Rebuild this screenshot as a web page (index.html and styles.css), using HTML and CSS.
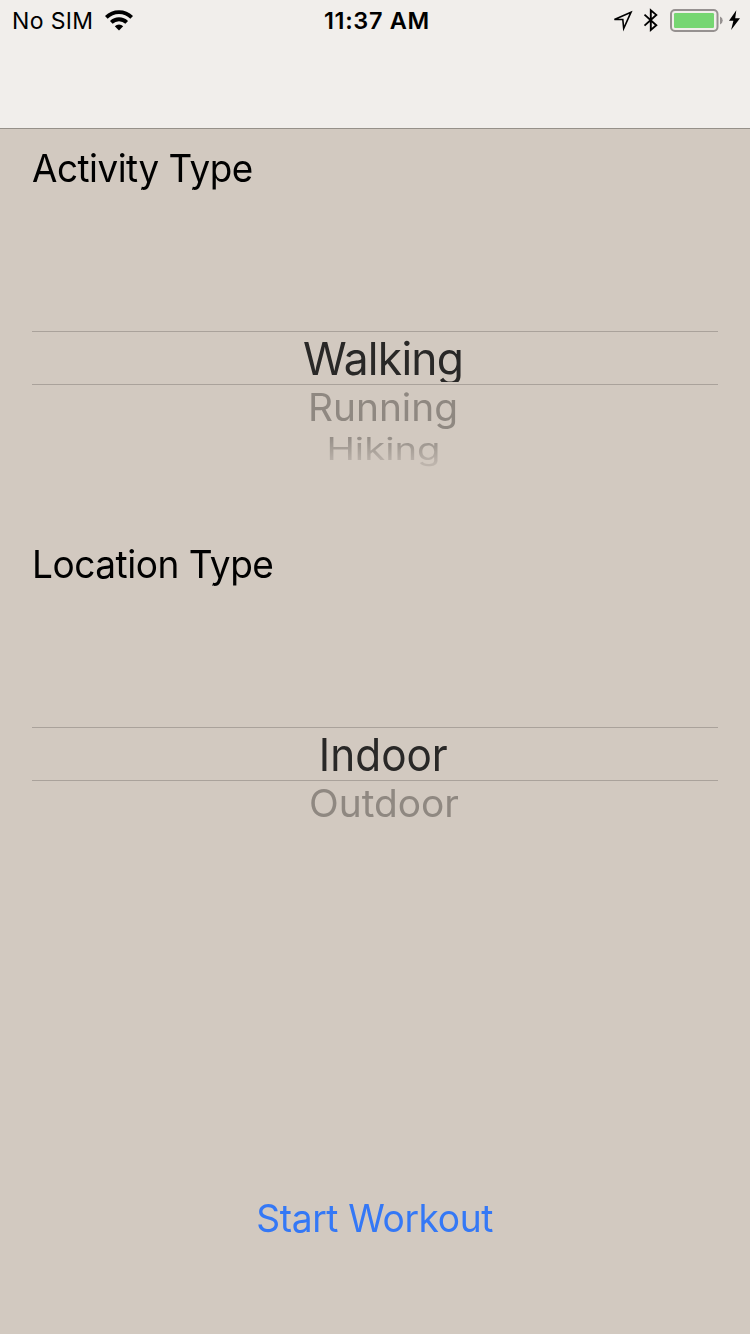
FILE: index.html
```html
<!DOCTYPE html>
<html lang="en">
<head>
<meta charset="utf-8">
<title>Start Workout</title>
<link rel="stylesheet" href="styles.css">
</head>
<body>
<header class="nav">
  <div class="status">
    <div class="status-left">
      <span class="carrier">No SIM</span>
      <svg class="wifi" width="28" height="21" viewBox="0 0 28 21">
        <path d="M14 20.4 9.8 16.2a6 6 0 0 1 8.4 0z"/>
        <path class="arc" d="M6.3 12.4a11 11 0 0 1 15.4 0M1.3 7.3a18 18 0 0 1 25.4 0"/>
      </svg>
    </div>
    <span class="time">11:37 AM</span>
    <svg class="indicators" width="130" height="40" viewBox="0 0 130 40">
      <path class="location" d="M11 12.2-5.6 19.5H2.8L3.7 28.5z"/>
      <path class="bluetooth" d="M24.5 14.6 36.3 25.2 30.8 30V10.2L36.3 14.9 24.5 25.6"/>
      <rect class="battery-shell" x="51" y="10" width="46.5" height="21" rx="4"/>
      <rect class="battery-level" x="54" y="13" width="40" height="15" rx="1.2"/>
      <path class="battery-tip" d="M100 16.5a4.3 4.3 0 0 1 0 8z"/>
      <path class="bolt" d="M116.3 10.2 109 20.8h4.4L111.1 30 120 18.2h-4.8z"/>
    </svg>
  </div>
</header>
<main class="content">
  <section class="field">
    <h2 class="label activity">Activity Type</h2>
    <div class="picker">
      <div class="row selected"><span class="walking">Walking</span></div>
      <div class="row next"><span>Running</span></div>
      <div class="row far"><span class="hiking">Hiking</span></div>
    </div>
  </section>
  <section class="field">
    <h2 class="label place">Location Type</h2>
    <div class="picker">
      <div class="row selected"><span class="indoor">Indoor</span></div>
      <div class="row next"><span>Outdoor</span></div>
    </div>
  </section>
  <button class="start" type="button">Start Workout</button>
</main>
</body>
</html>
```
FILE: styles.css
```css
* { box-sizing: border-box; }

body {
  margin: 0;
  height: 1334px;
  display: flex;
  flex-direction: column;
  background: #d2c9c0;
  color: #000;
  font-family: Inter, sans-serif;
  overflow: hidden;
}

.nav {
  height: 129px;
  background: #f1eeeb;
  border-bottom: 1px solid #969089;
}

.status {
  height: 41px;
  display: grid;
  grid-template-columns: 312px 1fr 145px;
  grid-template-rows: 41px;
  padding-left: 12px;
}

.status-left { display: flex; align-items: center; gap: 12px; }

.carrier {
  width: 81px;
  padding-top: 1px;
  font-size: 23px;
  line-height: 40px;
  letter-spacing: 0.35px;
  white-space: nowrap;
}

.wifi { margin-top: -1px; }
.arc { fill: none; stroke: #000; stroke-width: 3.8; }

.time {
  justify-self: start;
  font-size: 23.5px;
  font-weight: 600;
  line-height: 42px;
  letter-spacing: 0.65px;
  white-space: nowrap;
}

.indicators { justify-self: end; overflow: visible; }
.location { fill: none; stroke: #000; stroke-width: 1.6; }
.bluetooth { fill: none; stroke: #000; stroke-width: 1.9; }
.battery-shell { fill: none; stroke: #969190; stroke-width: 2; }
.battery-level { fill: #76d672; }
.battery-tip { fill: #969190; }

.content {
  flex: 1;
  display: flex;
  flex-direction: column;
  padding: 15px 32px 0;
}

.field { height: 396px; }

.label {
  margin: 0;
  height: 48px;
  font-size: 38.5px;
  font-weight: 400;
  line-height: 48px;
  letter-spacing: -0.5px;
  white-space: nowrap;
  transform-origin: left;
}

.activity { transform: scaleX(0.956); }
.place { transform: scaleX(0.962); }

.picker { padding-top: 139px; }

.row {
  display: flex;
  justify-content: center;
  padding-left: 17px;
  white-space: nowrap;
}

.row span { display: block; }

.selected {
  height: 54px;
  border-top: 1px solid #aaa29b;
  border-bottom: 1px solid #aaa29b;
  color: #292827;
  font-size: 45.5px;
  line-height: 54px;
}

.walking {
  letter-spacing: -0.8px;
  transform: scaleX(0.975);
  clip-path: inset(0 0 2px 0);
}

.indoor { transform: scaleX(0.93); }

.next {
  height: 44px;
  color: #8f8881;
  font-size: 37.8px;
  line-height: 44px;
}

.next span { transform: scaleX(1.028); }

.far { height: 40px; font-size: 30.5px; line-height: 40px; }

.hiking {
  transform: scaleX(1.255);
  color: transparent;
  background: linear-gradient(#958e87 20%, #bdb4ac 85%);
  background-clip: text;
}

.start {
  align-self: center;
  margin-top: 258px;
  padding: 0;
  border: 0;
  background: none;
  color: #3478f6;
  font: 400 38.5px/48px Inter, sans-serif;
  letter-spacing: -0.4px;
  transform: scaleX(0.965);
}
```
